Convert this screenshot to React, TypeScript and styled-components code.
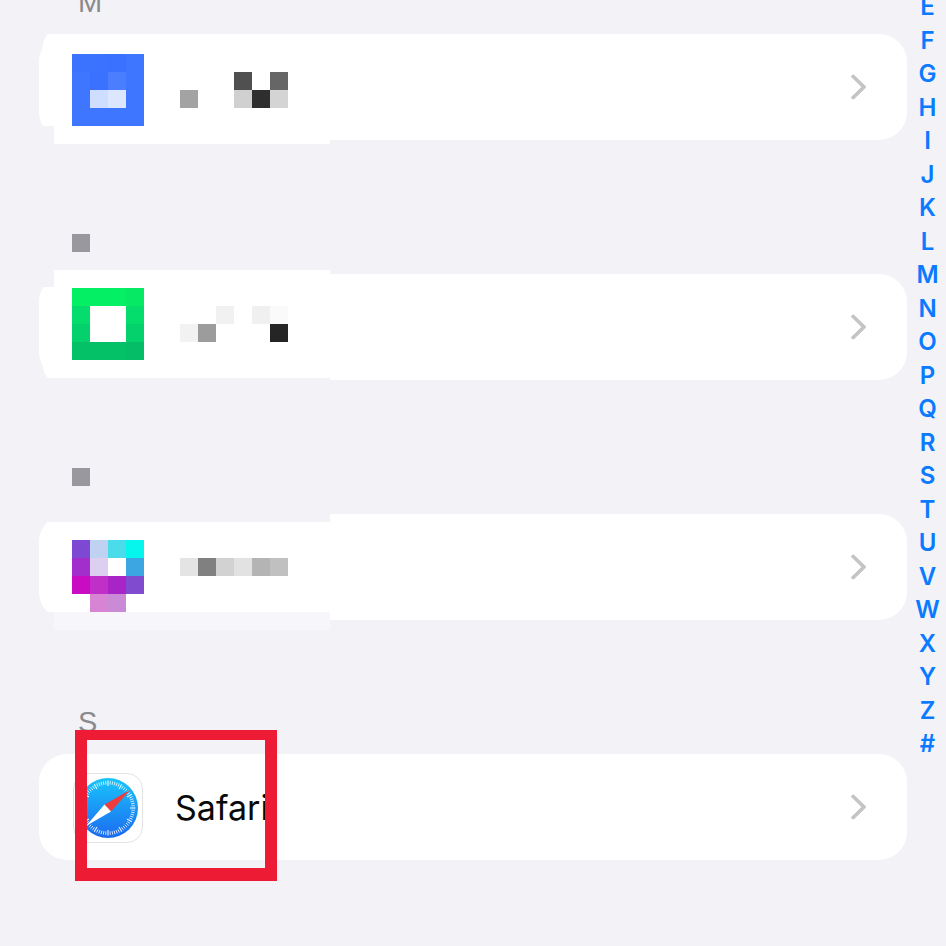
import styled, { createGlobalStyle } from "styled-components";

const pageBg = "#f2f2f7";
const cellSize = 18;

const GlobalStyle = createGlobalStyle`
  html, body {
    margin: 0;
    height: 946px;
    overflow: hidden;
    background: ${pageBg};
  }
`;

const Page = styled.div`
  display: flex;
  width: 946px;
  height: 946px;
  overflow: hidden;
  background: ${pageBg};
`;

const List = styled.main`
  flex: 1;
  display: flex;
  flex-direction: column;
  padding-left: 39px;
`;

const Section = styled.section<{ $height: number }>`
  flex: none;
  height: ${({ $height }) => $height}px;
  display: flex;
  flex-direction: column;
  justify-content: flex-end;
`;

const HeaderLetter = styled.div`
  margin: 0 0 14px 39px;
  font: 400 29px/36px "Liberation Sans", Arial, sans-serif;
  color: #8a8a8e;
`;

const HeaderBlock = styled.div<{ $gap: number }>`
  width: ${cellSize}px;
  height: ${cellSize}px;
  margin: 0 0 ${({ $gap }) => $gap}px 33px;
  background: #99989e;
`;

const Card = styled.div`
  position: relative;
  flex: none;
  width: 868px;
  height: 106px;
  border-radius: 28px;
  background: #fff;
`;

/* retouched strips that lie over the card edges around the blurred parts */
const Retouch = styled.div<{
  $left: number;
  $top: number;
  $width: number;
  $height: number;
  $color?: string;
  $round?: boolean;
}>`
  position: absolute;
  left: ${({ $left }) => $left}px;
  top: ${({ $top }) => $top}px;
  width: ${({ $width }) => $width}px;
  height: ${({ $height }) => $height}px;
  background: ${({ $color }) => $color ?? "#fff"};
  border-radius: ${({ $round }) => ($round ? "8px 0 0 8px / 30px 0 0 30px" : "0")};
`;

const Row = styled.div<{ $left: number }>`
  position: relative;
  height: 100%;
  display: flex;
  align-items: flex-start;
  padding: 0 41px 0 ${({ $left }) => $left}px;
  box-sizing: border-box;
`;

const Mosaic = styled.div<{ $cols: number; $top: number; $left?: number }>`
  display: grid;
  grid-template-columns: repeat(${({ $cols }) => $cols}, ${cellSize}px);
  grid-auto-rows: ${cellSize}px;
  margin-top: ${({ $top }) => $top}px;
  margin-left: ${({ $left }) => $left ?? 0}px;
`;

const Cell = styled.div<{ $color: string }>`
  background: ${({ $color }) => $color};
`;

const SafariTile = styled.div`
  flex: none;
  width: 70px;
  height: 70px;
  margin-top: 19px;
  box-sizing: border-box;
  border: 1px solid #e3e3e6;
  border-radius: 16px;
  background: #fff;
  display: flex;
  align-items: center;
  justify-content: center;
`;

const AppName = styled.div`
  margin: 19px 0 0 32px;
  font: 400 34px/70px Inter, "Liberation Sans", Arial, sans-serif;
  color: #0a0a0a;
`;

const ChevronIcon = styled.svg`
  flex: none;
  align-self: center;
  margin-left: auto;
  width: 16px;
  height: 26px;
`;

const RedFrame = styled.div`
  position: absolute;
  left: 36px;
  top: -24px;
  width: 202px;
  height: 151px;
  box-sizing: border-box;
  border-style: solid;
  border-color: #ee1b35;
  border-width: 10px 12px 13px 12px;
`;

const IndexBar = styled.nav`
  flex: none;
  width: 39px;
  margin-top: -10px;
  padding-left: 2px;
  box-sizing: border-box;
  display: flex;
  flex-direction: column;
  align-items: center;
`;

const IndexLetter = styled.div`
  flex: none;
  height: 33.5px;
  font: 600 24px/33.5px Inter, "Liberation Sans", sans-serif;
  color: #0a7aff;
`;

const Chevron = () => (
  <ChevronIcon viewBox="0 0 16 26">
    <path
      d="M3.2 2.5 L14 13 L3.2 23.5"
      fill="none"
      stroke="#c4c4c7"
      strokeWidth="3.8"
      strokeLinecap="round"
      strokeLinejoin="round"
    />
  </ChevronIcon>
);

const SafariIcon = () => {
  const ticks = Array.from({ length: 72 }, (_, i) => (i * 360) / 72);
  return (
    <svg width="62" height="62" viewBox="0 0 62 62">
      <defs>
        <linearGradient id="compass" x1="0" y1="0" x2="0" y2="1">
          <stop offset="0" stopColor="#19c5fb" />
          <stop offset="1" stopColor="#1c6af0" />
        </linearGradient>
      </defs>
      <circle cx="31" cy="31" r="30" fill="url(#compass)" />
      {ticks.map((angle, i) => (
        <line
          key={angle}
          x1="31"
          y1={i % 6 === 0 ? 3.5 : 4}
          x2="31"
          y2={i % 6 === 0 ? 9 : 7.5}
          stroke="#fff"
          strokeOpacity="0.9"
          strokeWidth={i % 6 === 0 ? 1.1 : 0.8}
          transform={`rotate(${angle} 31 31)`}
        />
      ))}
      <polygon points="53,13 34,34.5 27.5,27.5" fill="#ee3b3b" />
      <polygon points="9,49 34,34.5 27.5,27.5" fill="#fff" />
    </svg>
  );
};

const blue = [
  ["#3b73ff", "#3b73ff", "#3a72ff", "#3f76ff"],
  ["#3f76ff", "#3a72ff", "#4a7eff", "#3f76ff"],
  ["#3f76ff", "#cfddff", "#dce6ff", "#3f76ff"],
  ["#3f76ff", "#3f76ff", "#3f76ff", "#3f76ff"],
];
const green = [
  ["#05ef64", "#05ef64", "#05ef64", "#05e964"],
  ["#04dc6b", "#fff", "#fff", "#04dc6b"],
  ["#04d16b", "#fff", "#fff", "#04d16b"],
  ["#04c066", "#04c066", "#04c066", "#04bd66"],
];
const purple = [
  ["#7e49d2", "#c0d2f2", "#4bdcec", "#06f6ee"],
  ["#a22fcb", "#dccff0", "#fff", "#3ba6e2"],
  ["#c90cc4", "#c02fc8", "#a824c6", "#804bcf"],
  ["#fff", "#d884d4", "#cb8ad6", "#fff"],
];
const w = "#fff";
const nameOne = [
  [w, w, w, "#505050", w, "#666666"],
  ["#a3a3a3", w, w, "#d0d0d0", "#2e2e2e", "#d4d4d4"],
];
const nameTwo = [
  [w, w, "#f1f1f1", w, "#f0f0f0", "#fafafa"],
  ["#f2f2f2", "#9c9c9c", w, w, w, "#252525"],
];
const nameThree = [["#e4e4e4", "#808080", "#d2d2d2", "#e2e2e2", "#b4b4b4", "#c0c0c0"]];

const Cells = ({ rows }: { rows: string[][] }) => (
  <>
    {rows.flat().map((color, i) => (
      <Cell key={i} $color={color} />
    ))}
  </>
);

const letters = "EFGHIJKLMNOPQRSTUVWXYZ#".split("");

export default function App() {
  return (
    <Page>
      <GlobalStyle />
      <List>
        <Section $height={140}>
          <HeaderLetter>M</HeaderLetter>
          <Card>
            <Retouch $left={0} $top={92} $width={15} $height={14} $color={pageBg} />
            <Retouch $left={2} $top={0} $width={14} $height={92} $round />
            <Retouch $left={15} $top={0} $width={276} $height={110} />
            <Row $left={33}>
              <Mosaic $cols={4} $top={20}>
                <Cells rows={blue} />
              </Mosaic>
              <Mosaic $cols={6} $top={38} $left={36}>
                <Cells rows={nameOne} />
              </Mosaic>
              <Chevron />
            </Row>
          </Card>
        </Section>

        <Section $height={240}>
          <HeaderBlock $gap={22} />
          <Card>
            <Retouch $left={0} $top={0} $width={15} $height={13} $color={pageBg} />
            <Retouch $left={0} $top={104} $width={291} $height={3} $color={pageBg} />
            <Retouch $left={2} $top={13} $width={14} $height={91} $round />
            <Retouch $left={15} $top={-4} $width={276} $height={108} />
            <Row $left={33}>
              <Mosaic $cols={4} $top={14}>
                <Cells rows={green} />
              </Mosaic>
              <Mosaic $cols={6} $top={32} $left={36}>
                <Cells rows={nameTwo} />
              </Mosaic>
              <Chevron />
            </Row>
          </Card>
        </Section>

        <Section $height={240}>
          <HeaderBlock $gap={28} />
          <Card>
            <Retouch $left={0} $top={0} $width={291} $height={8} $color={pageBg} />
            <Retouch $left={0} $top={98} $width={15} $height={9} $color={pageBg} />
            <Retouch $left={15} $top={98} $width={276} $height={18} $color="#f7f7fb" />
            <Retouch $left={2} $top={8} $width={14} $height={90} $round />
            <Row $left={33}>
              <Mosaic $cols={4} $top={26}>
                <Cells rows={purple} />
              </Mosaic>
              <Mosaic $cols={6} $top={44} $left={36}>
                <Cells rows={nameThree} />
              </Mosaic>
              <Chevron />
            </Row>
          </Card>
        </Section>

        <Section $height={240}>
          <HeaderLetter>S</HeaderLetter>
          <Card>
            <Row $left={34}>
              <SafariTile>
                <SafariIcon />
              </SafariTile>
              <AppName>Safari</AppName>
              <Chevron />
            </Row>
            <RedFrame />
          </Card>
        </Section>
      </List>
      <IndexBar>
        {letters.map((letter) => (
          <IndexLetter key={letter}>{letter}</IndexLetter>
        ))}
      </IndexBar>
    </Page>
  );
}
